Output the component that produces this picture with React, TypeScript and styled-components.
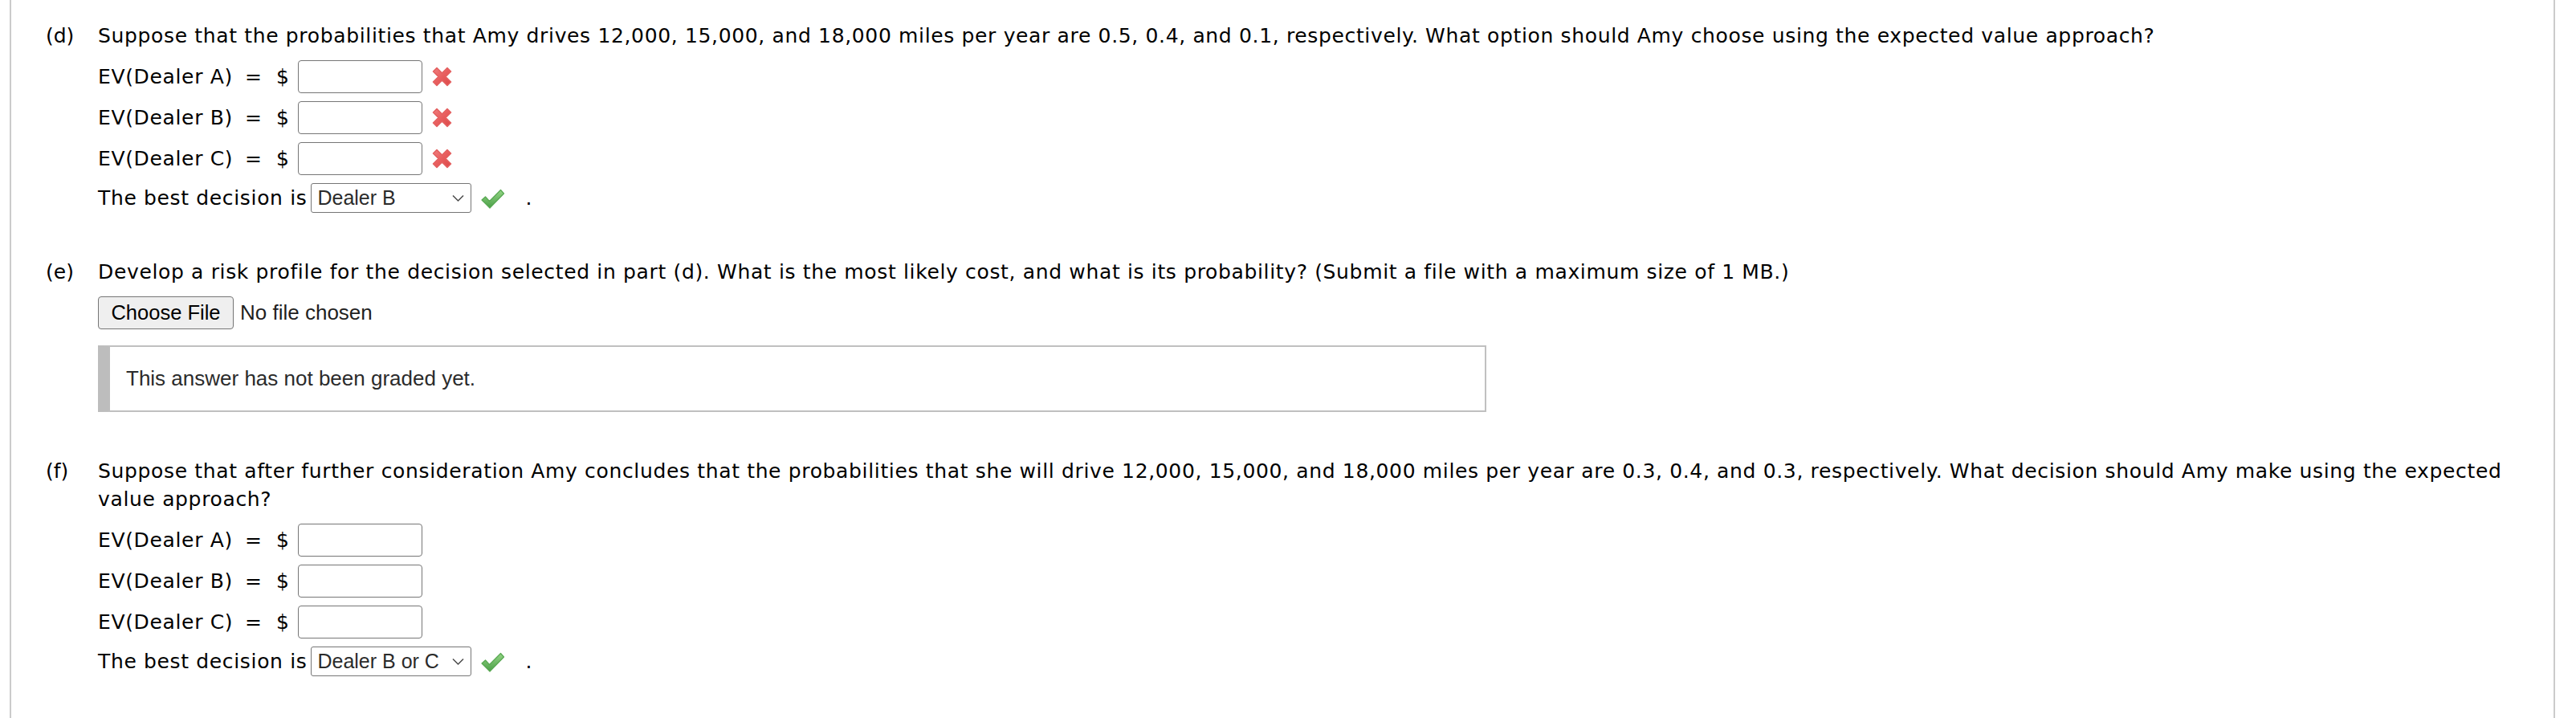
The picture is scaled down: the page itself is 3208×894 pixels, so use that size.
import React from 'react';
import styled, { createGlobalStyle } from 'styled-components';

const GlobalStyle = createGlobalStyle`
  html, body {
    margin: 0;
    padding: 0;
    background: #ffffff;
  }
  body {
    font-family: "DejaVu Sans", Verdana, sans-serif;
    color: #000000;
  }
`;

const Page = styled.div`
  margin-left: 12px;
  width: 3170px;
  height: 894px;
  box-sizing: border-box;
  border-left: 2px solid #cbcbcb;
  border-right: 2px solid #cbcbcb;
  padding: 27px 30px 0 43px;
  display: flex;
  flex-direction: column;
  gap: 56px;
`;

const Part = styled.section`
  display: grid;
  grid-template-columns: 65px 1fr;
  font-size: 25px;
  letter-spacing: 0.65px;
  line-height: 35px;
`;

const PartLabel = styled.div`
  white-space: nowrap;
  letter-spacing: 0;
`;

const Body = styled.div`
  display: flex;
  flex-direction: column;
  align-items: flex-start;
  gap: 10px;
`;

const Question = styled.p`
  margin: 0 0 3px;
`;

const EvRow = styled.div`
  display: flex;
  align-items: center;
  height: 41px;
`;

const EvLabel = styled.span`
  width: 183px;
  white-space: nowrap;
`;

const Equals = styled.span`
  width: 17px;
  letter-spacing: 0;
`;

const Dollar = styled.span`
  margin-left: 22px;
  margin-right: 11px;
  letter-spacing: 0;
`;

const AmountInput = styled.input`
  box-sizing: border-box;
  width: 155px;
  height: 41px;
  margin: 0;
  border: 1.5px solid #767676;
  border-radius: 4px;
  background: #ffffff;
  font-size: 22px;
`;

const Mark = styled.span`
  display: inline-flex;
  align-items: center;
  margin-left: 11px;
`;

const DecisionRow = styled.div`
  display: flex;
  align-items: center;
  height: 37px;
  white-space: nowrap;
`;

const SelectBox = styled.div`
  box-sizing: border-box;
  margin-left: 5px;
  width: 200px;
  height: 37px;
  padding: 0 8px 0 7px;
  border: 1.5px solid #767676;
  border-radius: 3px;
  display: flex;
  align-items: center;
  justify-content: space-between;
  font-family: "Liberation Sans", Arial, sans-serif;
  font-size: 25px;
  letter-spacing: 0;
  color: #2b2b2b;
`;

const Period = styled.span`
  margin-left: 25px;
`;

const FileRow = styled.div`
  display: flex;
  align-items: center;
  gap: 8px;
  font-family: "Liberation Sans", Arial, sans-serif;
  font-size: 26px;
  letter-spacing: 0;
  color: #1f1f1f;
`;

const FileButton = styled.button`
  box-sizing: border-box;
  width: 169px;
  height: 41px;
  margin: 0;
  padding: 0;
  border: 1.5px solid #767676;
  border-radius: 4px;
  background: #efefef;
  font-family: "Liberation Sans", Arial, sans-serif;
  font-size: 25.5px;
  color: #000000;
`;

const GradedNote = styled.div`
  box-sizing: border-box;
  width: 1729px;
  height: 83px;
  margin-top: 10px;
  padding-left: 20px;
  display: flex;
  align-items: center;
  border: 2px solid #c0c0c0;
  border-left: 15px solid #bdbdbd;
  font-family: "Liberation Sans", Arial, sans-serif;
  font-size: 26px;
  letter-spacing: 0;
  color: #2b2b2b;
`;

const Chevron = () => (
  <svg width="15" height="10" viewBox="0 0 15 10">
    <path d="M1 1.5 L7.5 8 L14 1.5" fill="none" stroke="#4a4a4a" strokeWidth="1.5" />
  </svg>
);

const WrongIcon = () => (
  <svg width="27" height="27" viewBox="0 0 27 27">
    <defs>
      <linearGradient id="xg" x1="0" y1="0" x2="1" y2="1">
        <stop offset="0" stopColor="#f07e7e" />
        <stop offset="0.5" stopColor="#e85e5e" />
        <stop offset="1" stopColor="#dc4848" />
      </linearGradient>
    </defs>
    <path
      d="M2.5 7 L7 2.5 L13.5 9 L20 2.5 L24.5 7 L18 13.5 L24.5 20 L20 24.5 L13.5 18 L7 24.5 L2.5 20 L9 13.5 Z"
      fill="url(#xg)"
      stroke="#e46060"
      strokeWidth="1.6"
      strokeLinejoin="round"
    />
  </svg>
);

const RightIcon = () => (
  <svg width="31" height="28" viewBox="0 0 31 28">
    <defs>
      <linearGradient id="cg" x1="0" y1="0" x2="0" y2="1">
        <stop offset="0" stopColor="#94d585" />
        <stop offset="1" stopColor="#4b9f48" />
      </linearGradient>
    </defs>
    <path
      d="M2 16 L6.5 12 L11.5 17.5 L25.5 3.5 L29.5 8 L12 26 Z"
      fill="url(#cg)"
      stroke="#58a852"
      strokeWidth="1.2"
      strokeLinejoin="round"
    />
  </svg>
);

interface EvLineProps {
  dealer: string;
  wrong?: boolean;
}

const EvLine = ({ dealer, wrong }: EvLineProps) => (
  <EvRow>
    <EvLabel>EV(Dealer {dealer})</EvLabel>
    <Equals>=</Equals>
    <Dollar>$</Dollar>
    <AmountInput type="text" />
    {wrong && (
      <Mark>
        <WrongIcon />
      </Mark>
    )}
  </EvRow>
);

const Decision = ({ choice }: { choice: string }) => (
  <DecisionRow>
    The best decision is
    <SelectBox>
      <span>{choice}</span>
      <Chevron />
    </SelectBox>
    <Mark>
      <RightIcon />
    </Mark>
    <Period>.</Period>
  </DecisionRow>
);

export default function App() {
  return (
    <>
      <GlobalStyle />
      <Page>
        <Part>
          <PartLabel>(d)</PartLabel>
          <Body>
            <Question>
              Suppose that the probabilities that Amy drives 12,000, 15,000, and 18,000 miles per year
              are 0.5, 0.4, and 0.1, respectively. What option should Amy choose using the expected
              value approach?
            </Question>
            <EvLine dealer="A" wrong />
            <EvLine dealer="B" wrong />
            <EvLine dealer="C" wrong />
            <Decision choice="Dealer B" />
          </Body>
        </Part>

        <Part>
          <PartLabel>(e)</PartLabel>
          <Body>
            <Question>
              Develop a risk profile for the decision selected in part (d). What is the most likely
              cost, and what is its probability? (Submit a file with a maximum size of 1 MB.)
            </Question>
            <FileRow>
              <FileButton type="button">Choose File</FileButton>
              <span>No file chosen</span>
            </FileRow>
            <GradedNote>This answer has not been graded yet.</GradedNote>
          </Body>
        </Part>

        <Part>
          <PartLabel>(f)</PartLabel>
          <Body>
            <Question>
              Suppose that after further consideration Amy concludes that the probabilities that she
              will drive 12,000, 15,000, and 18,000 miles per year are 0.3, 0.4, and 0.3,
              respectively. What decision should Amy make using the expected value approach?
            </Question>
            <EvLine dealer="A" />
            <EvLine dealer="B" />
            <EvLine dealer="C" />
            <Decision choice="Dealer B or C" />
          </Body>
        </Part>
      </Page>
    </>
  );
}
